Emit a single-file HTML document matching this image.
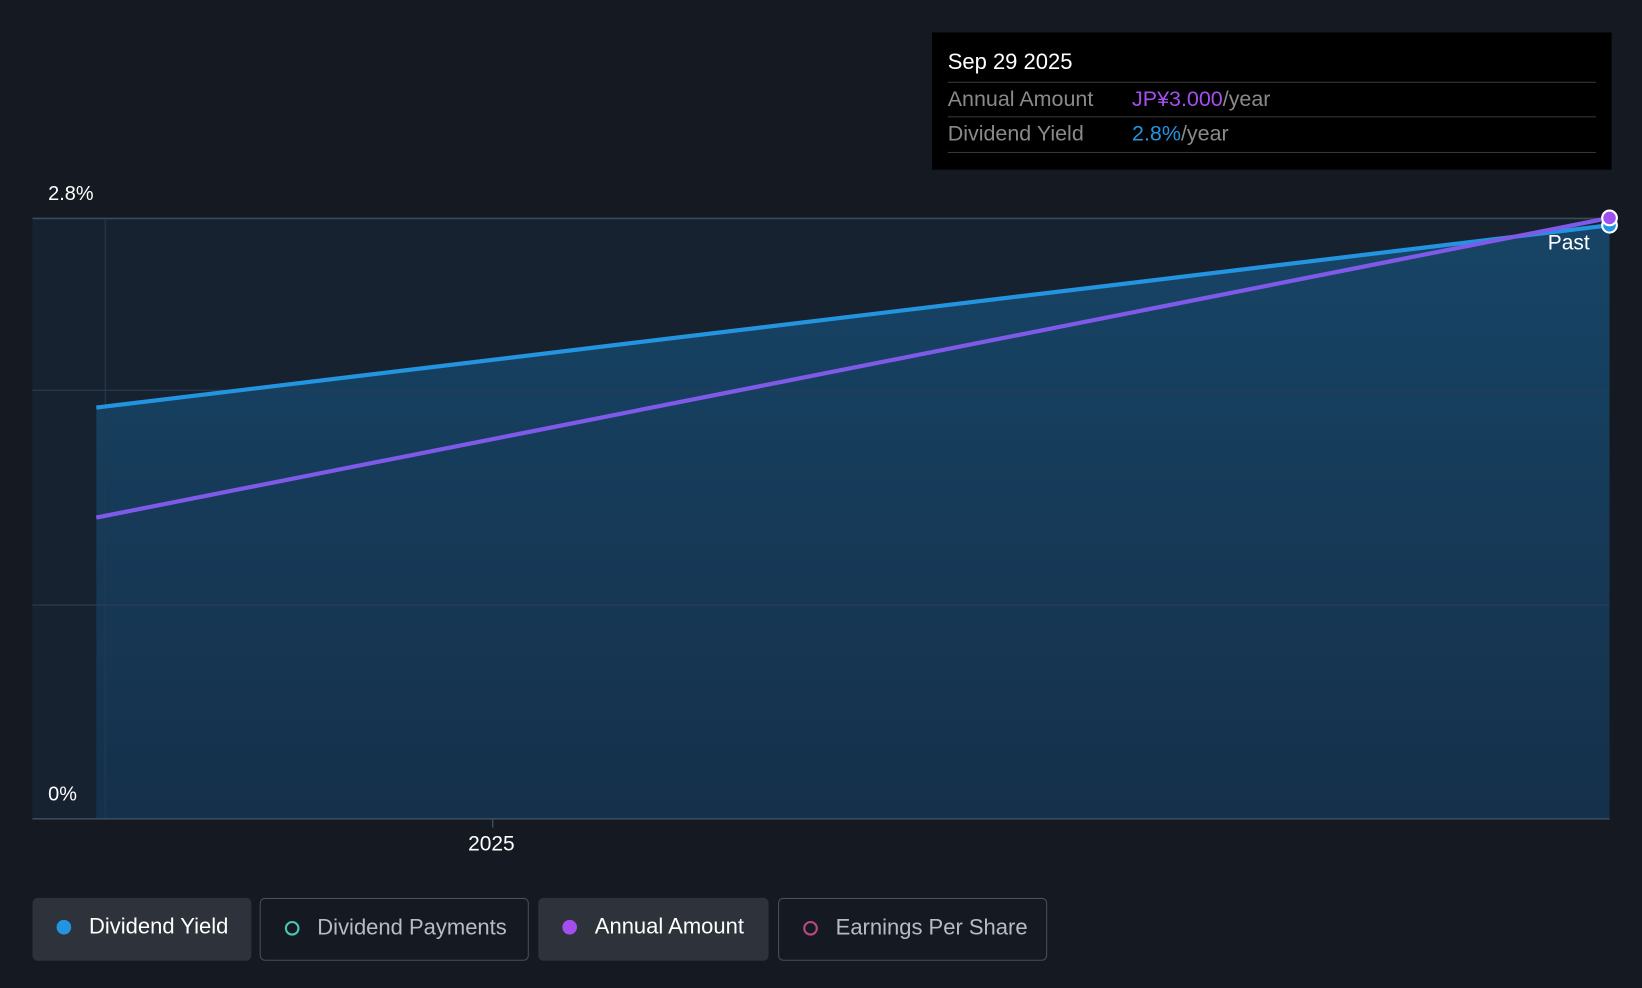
<!DOCTYPE html>
<html><head><meta charset="utf-8"><style>
html,body{margin:0;padding:0;background:#151a22;overflow:hidden;width:1642px;height:988px}
#w{position:absolute;left:0;top:0;width:1568px;height:943px;transform:scale(1.04719,1.04772);transform-origin:0 0;font-family:"Liberation Sans",sans-serif}
.t{position:absolute;color:#fff;font-size:19px}
.tip{position:absolute;left:890px;top:31px;width:649px;height:131px;background:#000}
.row{position:absolute;left:15px;width:619px;border-top:1.5px solid #3a3a3a;font-size:20.5px;color:#8a8a8a}
.btn{position:absolute;top:857px;height:60px;border-radius:5px;box-sizing:border-box;font-size:21px;line-height:56px;color:#fff}
.dot{display:inline-block;width:14px;height:14px;border-radius:50%;margin:0 17px 0 23px;vertical-align:-1px;box-sizing:border-box}
</style></head><body><div id="w">
<svg width="1568" height="943" style="position:absolute;left:0;top:0">
<defs><linearGradient id="g" x1="0" y1="0" x2="0" y2="1"><stop offset="0" stop-color="#174466"/><stop offset="1" stop-color="#15304a"/></linearGradient></defs>
<rect x="31" y="208" width="1506" height="573" fill="#162230"/>
<polygon points="92,389 1537,215 1537,781 92,781" fill="url(#g)"/>
<line x1="31" y1="208.5" x2="1537" y2="208.5" stroke="#3b4a5a" stroke-width="1.5"/>
<line x1="31" y1="372.5" x2="1537" y2="372.5" stroke="#2b3e52" stroke-width="1"/>
<line x1="31" y1="577.5" x2="1537" y2="577.5" stroke="#2b3e52" stroke-width="1"/>
<line x1="100.5" y1="208" x2="100.5" y2="781" stroke="#253a50" stroke-width="1"/>
<line x1="31" y1="781.5" x2="1537" y2="781.5" stroke="#3b4a5a" stroke-width="1.5"/>
<line x1="470.5" y1="781" x2="470.5" y2="790" stroke="#3b4a5a" stroke-width="1.5"/>
<line x1="92" y1="389" x2="1537" y2="215" stroke="#2394e0" stroke-width="4"/>
<line x1="92" y1="494" x2="1537" y2="208" stroke="#7f5ae8" stroke-width="4"/>
<circle cx="1537" cy="215" r="7" fill="#2394e0" stroke="#fff" stroke-width="2"/>
<circle cx="1537" cy="208" r="7" fill="#a050f0" stroke="#fff" stroke-width="2"/>
</svg>
<div class="t" style="left:46px;top:175px">2.8%</div>
<div class="t" style="left:46px;top:748px">0%</div>
<div class="t" style="left:447px;top:795px;font-size:20px">2025</div>
<div class="t" style="left:1478px;top:221px;font-size:20px">Past</div>
<div class="tip">
<div style="position:absolute;left:15px;top:17px;color:#fff;font-size:21px">Sep 29 2025</div>
<div class="row" style="top:47px;height:32px;line-height:32px">Annual Amount<span style="position:absolute;left:176px"><span style="color:#a44ef0">JP¥3.000</span>/year</span></div>
<div class="row" style="top:80px;height:33px;line-height:31px;border-bottom:1.5px solid #3a3a3a">Dividend Yield<span style="position:absolute;left:176px"><span style="color:#2394e0">2.8%</span>/year</span></div>
</div>
<div class="btn" style="left:31px;width:209px;background:#2d323b"><span class="dot" style="background:#2394e0;margin-left:23px"></span>Dividend Yield</div>
<div class="btn" style="left:248px;width:257px;border:1.5px solid #4a4e56;color:#b8bcc2"><span class="dot" style="border:2px solid #4fc4b8"></span>Dividend Payments</div>
<div class="btn" style="left:514px;width:220px;background:#2d323b"><span class="dot" style="background:#a44ef0"></span>Annual Amount</div>
<div class="btn" style="left:743px;width:257px;border:1.5px solid #4a4e56;color:#b8bcc2"><span class="dot" style="border:2px solid #b84a82"></span>Earnings Per Share</div>
</div></body></html>
